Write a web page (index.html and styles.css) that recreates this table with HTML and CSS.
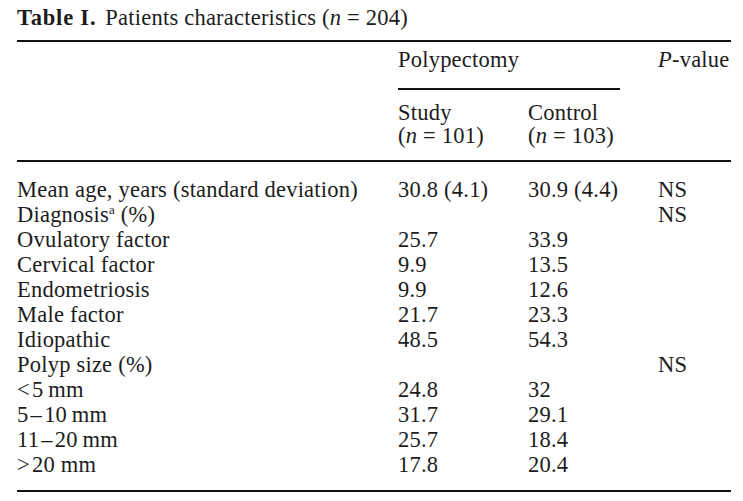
FILE: index.html
```html
<!DOCTYPE html>
<html lang="en">
<head>
<meta charset="utf-8">
<title>Table I. Patients characteristics</title>
<link rel="stylesheet" href="styles.css">
</head>
<body>
<div class="page">
  <table class="data">
    <caption class="title"><b class="label">Table I.</b><span class="title-text">Patients characteristics (<i>n</i> = 204)</span></caption>
    <colgroup>
      <col class="c-label">
      <col class="c-num">
      <col class="c-num">
      <col class="c-p">
    </colgroup>
    <thead>
      <tr class="head-1">
        <th rowspan="2" class="blank"></th>
        <th colspan="2" class="group"><div class="group-rule">Polypectomy</div></th>
        <th rowspan="2" class="pval"><i>P</i>-value</th>
      </tr>
      <tr class="head-2">
        <th class="sub">Study<br>(<i>n</i> = 101)</th>
        <th class="sub">Control<br>(<i>n</i> = 103)</th>
      </tr>
    </thead>
    <tbody>
      <tr class="first"><td>Mean age, years (standard deviation)</td><td>30.8 (4.1)</td><td>30.9 (4.4)</td><td>NS</td></tr>
      <tr><td>Diagnosis<sup class="note">a</sup> (%)</td><td></td><td></td><td>NS</td></tr>
      <tr><td>Ovulatory factor</td><td>25.7</td><td>33.9</td><td></td></tr>
      <tr><td>Cervical factor</td><td>9.9</td><td>13.5</td><td></td></tr>
      <tr><td>Endometriosis</td><td>9.9</td><td>12.6</td><td></td></tr>
      <tr><td>Male factor</td><td>21.7</td><td>23.3</td><td></td></tr>
      <tr><td>Idiopathic</td><td>48.5</td><td>54.3</td><td></td></tr>
      <tr><td>Polyp size (%)</td><td></td><td></td><td>NS</td></tr>
      <tr><td>&lt;&#8202;5&#8201;mm</td><td>24.8</td><td>32</td><td></td></tr>
      <tr><td>5&#8202;&ndash;&#8202;10&#8201;mm</td><td>31.7</td><td>29.1</td><td></td></tr>
      <tr><td>11&#8202;&ndash;&#8202;20&#8201;mm</td><td>25.7</td><td>18.4</td><td></td></tr>
      <tr class="last"><td>&gt;&#8202;20 mm</td><td>17.8</td><td>20.4</td><td></td></tr>
    </tbody>
  </table>
</div>
</body>
</html>
```

FILE: styles.css
```css
html, body {
  margin: 0;
  padding: 0;
  background: #ffffff;
}

body {
  font-family: "Liberation Serif", "Times New Roman", serif;
  font-size: 22.5px;
  letter-spacing: 0.22px;
  color: #1c1c1c;
}

.page {
  padding: 5px 0 0 17px;
}

.data {
  width: 714px;
  border-collapse: separate;
  border-spacing: 0;
  table-layout: fixed;
}

.c-label { width: 381px; }
.c-num { width: 130px; }
.c-p { width: 73px; }

.title {
  caption-side: top;
  text-align: left;
  line-height: 25px;
  padding-bottom: 10px;
  white-space: nowrap;
}

.label {
  font-weight: bold;
  letter-spacing: 0.8px;
}

.title-text {
  margin-left: 9px;
}

th, td {
  padding: 0;
  text-align: left;
  vertical-align: top;
  font-weight: normal;
  white-space: nowrap;
}

.head-1 th {
  border-top: 2px solid #111;
  padding-top: 5px;
  line-height: 25px;
}

.head-1 .blank,
.head-1 .pval {
  border-bottom: 2px solid #111;
}

.group-rule {
  width: 222px;
  padding-bottom: 16px;
  border-bottom: 2px solid #111;
}

.head-2 .sub {
  padding-top: 11px;
  padding-bottom: 13px;
  line-height: 23px;
  border-bottom: 2px solid #111;
}

tbody td {
  line-height: 25px;
}

tbody .first td {
  padding-top: 15px;
}

tbody .last td {
  padding-bottom: 13px;
  border-bottom: 2px solid #111;
}

.note {
  font-size: 13px;
  line-height: 0;
  vertical-align: 8px;
}
```
